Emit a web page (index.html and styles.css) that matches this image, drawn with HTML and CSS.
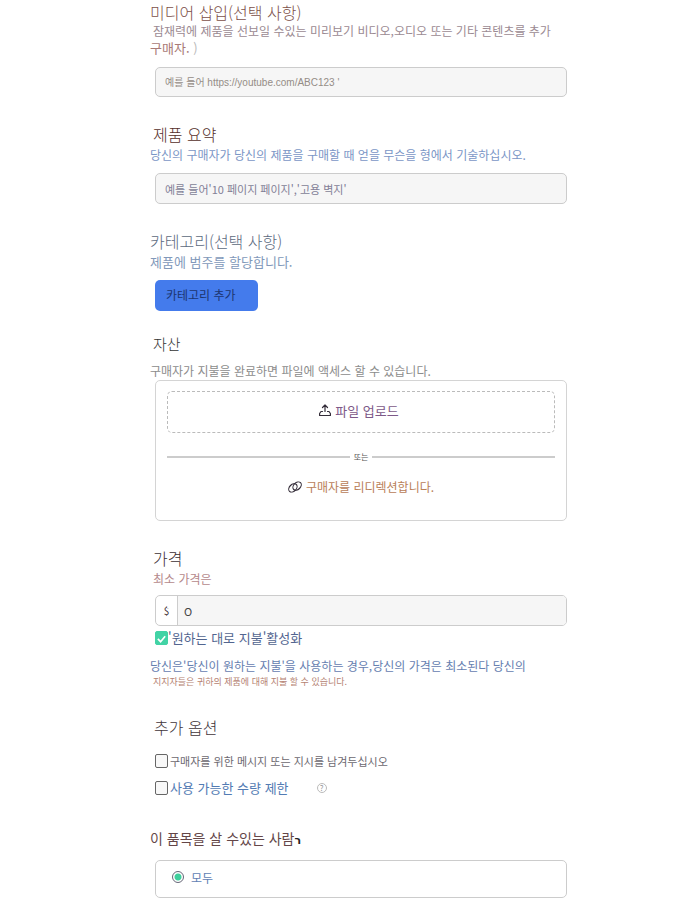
FILE: index.html
```html
<!DOCTYPE html>
<html lang="ko">
<head>
  <meta charset="UTF-8">
  <title>제품 등록</title>
  <link rel="stylesheet" href="styles.css">
</head>
<body>
<form class="product-form">

  <section class="media">
    <h2><label for="media">미디어 삽입(선택 사항)</label></h2>
    <p class="desc">잠재력에 제품을 선보일 수있는 미리보기 비디오,오디오 또는 기타 콘텐츠를 추가</p>
    <p class="buyer">구매자. <span class="paren">)</span></p>
    <input class="field" type="text" id="media" placeholder="예를 들어 https://youtube.com/ABC123 '">
  </section>

  <section class="summary">
    <h2><label for="summary">제품 요약</label></h2>
    <p class="desc">당신의 구매자가 당신의 제품을 구매할 때 얻을 무슨을 형에서 기술하십시오.</p>
    <input class="field" type="text" id="summary" placeholder="예를 들어'10 페이지 페이지','고용 벽지'">
  </section>

  <section class="category">
    <h2>카테고리(선택 사항)</h2>
    <p class="desc">제품에 범주를 할당합니다.</p>
    <button type="button" class="add-button">카테고리 추가</button>
  </section>

  <section class="assets">
    <h2>자산</h2>
    <p class="desc">구매자가 지불을 완료하면 파일에 액세스 할 수 있습니다.</p>
    <div class="asset-box">
      <button type="button" class="upload">
        <svg width="12" height="12" viewBox="0 0 12 12" fill="none" stroke="currentColor" stroke-width="1.2" stroke-linejoin="round" stroke-linecap="round">
          <path d="M6 7.5V1M3.5 3.5L6 1l2.5 2.5M3.5 7.5H2L0.6 9.5v2h10.8v-2L10 7.5H8.5"/>
        </svg>
        파일 업로드
      </button>
      <div class="divider">또는</div>
      <a class="redirect" href="#">
        <svg width="14" height="12" viewBox="0 0 14 12" fill="none" stroke="currentColor" stroke-width="1.1">
          <ellipse cx="4.9" cy="6.9" rx="4.8" ry="3.4" transform="rotate(-45 4.9 6.9)"/>
          <ellipse cx="9.1" cy="5.1" rx="4.8" ry="3.4" transform="rotate(-45 9.1 5.1)"/>
        </svg>
        구매자를 리디렉션합니다.
      </a>
    </div>
  </section>

  <section class="price">
    <h2><label for="price">가격</label></h2>
    <p class="desc">최소 가격은</p>
    <div class="price-field">
      <span class="currency">$</span>
      <input type="text" id="price" value="O">
    </div>
    <label class="check enable"><input type="checkbox" checked>'원하는 대로 지불'활성화</label>
    <p class="note">당신은'당신이 원하는 지불'을 사용하는 경우,당신의 가격은 최소된다 당신의</p>
    <p class="note-small">지지자들은 귀하의 제품에 대해 지불 할 수 있습니다.</p>
  </section>

  <section class="options">
    <h2>추가 옵션</h2>
    <label class="check message"><input type="checkbox">구매자를 위한 메시지 또는 지시를 남겨두십시오</label>
    <div class="limit-row">
      <label class="check limit"><input type="checkbox">사용 가능한 수량 제한</label>
      <span class="help">?</span>
    </div>
  </section>

  <section class="audience">
    <h2>이 품목을 살 수있는 사람<b>ר</b></h2>
    <label class="choice"><input type="radio" name="audience" checked>모두</label>
  </section>

</form>
</body>
</html>
```
FILE: styles.css
```css
* {
  box-sizing: border-box;
}

body {
  margin: 0;
  background-color: #fff;
  font-family: "Noto Sans CJK KR", "Liberation Sans", sans-serif;
  font-weight: 400;
}

.product-form {
  padding: 3px 127px 0 150px;
}

section {
  display: flex;
  flex-direction: column;
  align-items: flex-start;
  margin-bottom: 28px;
}

h2 {
  margin: 0 0 4px;
  font-size: 16px;
  font-weight: 300;
  line-height: 18px;
}

p {
  margin: 0;
  line-height: 16px;
  white-space: nowrap;
}

.desc {
  font-size: 12px;
}

input,
button {
  font-family: inherit;
  font-weight: inherit;
}

.field,
.price-field,
.asset-box,
.choice {
  align-self: stretch;
  margin-left: 5px;
  border: 1px solid #ccc;
  border-radius: 5px;
}

.field {
  height: 31px;
  margin-top: 10px;
  padding: 0 9px;
  background-color: #f6f6f6;
  font-size: 11px;
}

.field::placeholder {
  color: #837f96;
  opacity: 1;
}

/* media */
.media {
  color: #7c4f48;
}

.media .desc,
.summary h2 {
  padding-left: 3px;
}

.media h2 {
  margin-bottom: 2px;
}

.media .desc {
  color: #9b8a92;
}

.media .buyer {
  margin-top: 1px;
  color: #a97a76;
  font-size: 13px;
}

.media .paren {
  color: #bbb;
}

.media .field {
  height: 30px;
  margin-top: 11px;
  font-family: "Liberation Sans", "Noto Sans CJK KR", sans-serif;
  font-size: 10px;
}

.media .field::placeholder {
  color: #958d86;
}

/* summary */
.summary {
  color: #55302a;
}

.summary .desc {
  color: #7b96c6;
}

/* category */
.category {
  margin-bottom: 24px;
  color: #5c6a80;
}

.category .desc {
  color: #8299ba;
  font-size: 13px;
}

.add-button {
  height: 31px;
  margin: 10px 0 0 5px;
  padding: 0 22px 3px 11px;
  border: 0;
  border-radius: 5px;
  background-color: #447bec;
  color: #1c3570;
  font-size: 12px;
}

/* assets */
.assets h2 {
  margin-bottom: 10px;
  padding-left: 3px;
  color: #333;
  font-size: 15px;
}

.assets .desc {
  color: #8c8c8c;
}

.asset-box {
  display: flex;
  flex-direction: column;
  align-items: center;
  height: 141px;
  margin-top: 1px;
  padding: 10px 11px;
  border-color: #d4d4d4;
}

.upload {
  display: flex;
  justify-content: center;
  align-items: center;
  gap: 4px;
  width: 100%;
  height: 42px;
  padding: 0 4px 4px 0;
  border: 1px dashed #bbb;
  border-radius: 5px;
  background: none;
  color: #7d5988;
  font-size: 13px;
}

.upload svg,
.redirect svg {
  color: #332c38;
}

.divider {
  display: flex;
  align-items: center;
  gap: 4px;
  width: 100%;
  margin: 16px 0 14px;
  color: #555;
  font-size: 8px;
  line-height: 16px;
}

.divider::before,
.divider::after {
  content: "";
  flex: 1;
  height: 2px;
  background-color: #ccc;
}

.redirect {
  display: flex;
  align-items: center;
  gap: 4px;
  color: #b98058;
  font-size: 12px;
  line-height: 16px;
  text-decoration: none;
}

/* price */
.price {
  color: #3c2f34;
}

.price h2,
.price .desc,
.options h2 {
  padding-left: 3px;
}

.price .desc {
  color: #b5898b;
}

.price-field {
  display: flex;
  height: 31px;
  margin-top: 8px;
  overflow: hidden;
}

.currency {
  width: 22px;
  border-right: 1px solid #ccc;
  font-size: 10px;
  line-height: 29px;
  text-align: center;
}

.price-field input {
  flex: 1;
  min-width: 0;
  padding: 0 6px;
  border: 0;
  background-color: #f6f6f6;
  color: #444;
  font-size: 11px;
}

.check {
  display: flex;
  align-items: center;
  gap: 2px;
  margin-left: 5px;
  line-height: 16px;
  white-space: nowrap;
}

.check input {
  appearance: none;
  width: 13px;
  height: 14px;
  margin: 0;
  border: 1px solid #666;
  border-radius: 2px;
  background-color: #f8f8f8;
}

.check input:checked {
  border-color: #42d3a5;
  background: #42d3a5 url("data:image/svg+xml,%3Csvg xmlns='http://www.w3.org/2000/svg' viewBox='0 0 12 12'%3E%3Cpath d='M2 6.5l3 3 5-6' fill='none' stroke='white' stroke-width='1.8'/%3E%3C/svg%3E") center / 11px no-repeat;
}

.enable {
  gap: 0;
  margin-top: 4px;
  color: #52658f;
  font-size: 13px;
}

.note {
  margin-top: 12px;
  color: #6680b0;
  font-size: 12px;
}

.note-small {
  padding-left: 3px;
  color: #b58272;
  font-size: 9px;
}

/* options */
.options {
  margin-bottom: 33px;
}

.options h2 {
  margin-bottom: 17px;
  padding-left: 4px;
  color: #413439;
}

.message {
  margin-bottom: 11px;
  color: #6c6870;
  font-size: 11px;
}

.limit-row {
  display: flex;
  align-items: center;
  gap: 28px;
}

.limit {
  color: #527bb3;
  font-size: 13px;
}

.help {
  width: 10px;
  height: 10px;
  border: 1px solid #bbb;
  border-radius: 50%;
  color: #999;
  font-size: 8px;
  line-height: 8px;
  text-align: center;
}

/* audience */
.audience {
  margin-bottom: 0;
}

.audience h2 {
  margin-bottom: 10px;
  color: #644648;
  font-size: 14px;
  font-weight: 400;
}

.audience b {
  color: #222;
  font-family: "DejaVu Sans", sans-serif;
  font-size: 11px;
}

.choice {
  display: flex;
  align-items: center;
  gap: 7px;
  height: 38px;
  padding: 0 16px 4px;
  color: #5f7eb4;
  font-size: 12px;
}

.choice input {
  appearance: none;
  width: 12px;
  height: 12px;
  margin: 0;
  border: 1px solid #667;
  border-radius: 50%;
  background: radial-gradient(#3ecf9c 3px, #fff 4px);
}
```
